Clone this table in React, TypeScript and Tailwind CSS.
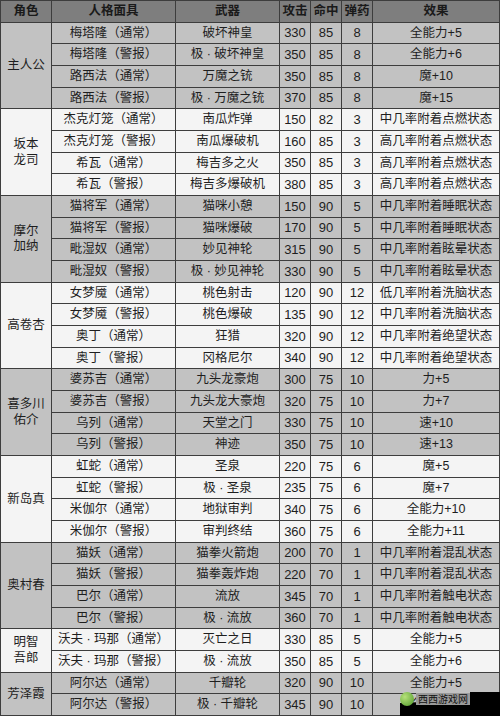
type Row = [string, string, number, number, number, string];

type Group = {
  role: string[];
  shade: 'gray' | 'white';
  rows: Row[];
};

const groups: Group[] = [
  {
    role: ['主人公'],
    shade: 'gray',
    rows: [
      ['梅塔隆（通常）', '破坏神皇', 330, 85, 8, '全能力+5'],
      ['梅塔隆（警报）', '极 · 破坏神皇', 350, 85, 8, '全能力+6'],
      ['路西法（通常）', '万魔之铳', 350, 85, 8, '魔+10'],
      ['路西法（警报）', '极 · 万魔之铳', 370, 85, 8, '魔+15'],
    ],
  },
  {
    role: ['坂本', '龙司'],
    shade: 'white',
    rows: [
      ['杰克灯笼（通常）', '南瓜炸弹', 150, 82, 3, '中几率附着点燃状态'],
      ['杰克灯笼（警报）', '南瓜爆破机', 160, 85, 3, '高几率附着点燃状态'],
      ['希瓦（通常）', '梅吉多之火', 350, 85, 3, '高几率附着点燃状态'],
      ['希瓦（警报）', '梅吉多爆破机', 380, 85, 3, '高几率附着点燃状态'],
    ],
  },
  {
    role: ['摩尔', '加纳'],
    shade: 'gray',
    rows: [
      ['猫将军（通常）', '猫咪小憩', 150, 90, 5, '中几率附着睡眠状态'],
      ['猫将军（警报）', '猫咪爆破', 170, 90, 5, '中几率附着睡眠状态'],
      ['毗湿奴（通常）', '妙见神轮', 315, 90, 5, '中几率附着眩晕状态'],
      ['毗湿奴（警报）', '极 · 妙见神轮', 330, 90, 5, '中几率附着眩晕状态'],
    ],
  },
  {
    role: ['高卷杏'],
    shade: 'white',
    rows: [
      ['女梦魇（通常）', '桃色射击', 120, 90, 12, '低几率附着洗脑状态'],
      ['女梦魇（警报）', '桃色爆破', 135, 90, 12, '中几率附着洗脑状态'],
      ['奥丁（通常）', '狂猎', 320, 90, 12, '中几率附着绝望状态'],
      ['奥丁（警报）', '冈格尼尔', 340, 90, 12, '中几率附着绝望状态'],
    ],
  },
  {
    role: ['喜多川', '佑介'],
    shade: 'gray',
    rows: [
      ['婆苏吉（通常）', '九头龙豪炮', 300, 75, 10, '力+5'],
      ['婆苏吉（警报）', '九头龙大豪炮', 320, 75, 10, '力+7'],
      ['乌列（通常）', '天堂之门', 330, 75, 10, '速+10'],
      ['乌列（警报）', '神迹', 350, 75, 10, '速+13'],
    ],
  },
  {
    role: ['新岛真'],
    shade: 'white',
    rows: [
      ['虹蛇（通常）', '圣泉', 220, 75, 6, '魔+5'],
      ['虹蛇（警报）', '极 · 圣泉', 235, 75, 6, '魔+7'],
      ['米伽尔（通常）', '地狱审判', 340, 75, 6, '全能力+10'],
      ['米伽尔（警报）', '审判终结', 360, 75, 6, '全能力+11'],
    ],
  },
  {
    role: ['奥村春'],
    shade: 'gray',
    rows: [
      ['猫妖（通常）', '猫拳火箭炮', 200, 70, 1, '中几率附着混乱状态'],
      ['猫妖（警报）', '猫拳轰炸炮', 220, 70, 1, '中几率附着混乱状态'],
      ['巴尔（通常）', '流放', 345, 70, 1, '中几率附着触电状态'],
      ['巴尔（警报）', '极 · 流放', 360, 70, 1, '中几率附着触电状态'],
    ],
  },
  {
    role: ['明智', '吾郎'],
    shade: 'white',
    rows: [
      ['沃夫 · 玛那（通常）', '灭亡之日', 330, 85, 5, '全能力+5'],
      ['沃夫 · 玛那（警报）', '极 · 流放', 350, 85, 5, '全能力+6'],
    ],
  },
  {
    role: ['芳泽霞'],
    shade: 'gray',
    rows: [
      ['阿尔达（通常）', '千瓣轮', 320, 90, 10, '全能力+5'],
      ['阿尔达（警报）', '极 · 千瓣轮', 345, 90, 10, '全能力+6'],
    ],
  },
];

const headers = ['角色', '人格面具', '武器', '攻击', '命中', '弹药', '效果'];

const cell = 'flex items-center justify-center text-center leading-none whitespace-nowrap';

export default function App() {
  return (
    <div
      className="relative w-[500px] h-[716px] overflow-hidden text-[12.5px] text-[#1e1e1e]"
      style={{ fontFamily: '"Liberation Sans", "Noto Sans CJK SC", sans-serif' }}
    >
      <div className="grid h-full grid-cols-[50px_123px_103px_30px_30px_30px_126px] grid-rows-[repeat(33,minmax(0,1fr))] gap-px p-px bg-[#3d3d3d]">
        {headers.map(h => (
          <div key={h} className={`${cell} bg-[#7e7e7e] font-bold text-[#1a1a1a]`}>
            {h}
          </div>
        ))}

        {groups.map(g => {
          const bg = g.shade === 'gray' ? 'bg-[#c2c2c2]' : 'bg-[#f4f4f4]';
          return [
            <div
              key={g.role.join('')}
              className={`${cell} ${bg} flex-col gap-[3px] ${g.rows.length === 4 ? 'row-span-4' : 'row-span-2'}`}
            >
              {g.role.map(line => (
                <span key={line}>{line}</span>
              ))}
            </div>,
            ...g.rows.map((r, i) => (
              <div key={g.role.join('') + i} className="contents">
                <div className={`${cell} ${bg}`}>{r[0]}</div>
                <div className={`${cell} ${bg}`}>{r[1]}</div>
                <div className={`${cell} ${bg} text-[13px]`}>{r[2]}</div>
                <div className={`${cell} ${bg} text-[13px]`}>{r[3]}</div>
                <div className={`${cell} ${bg} text-[13px]`}>{r[4]}</div>
                <div className={`${cell} ${bg}`}>{r[5]}</div>
              </div>
            )),
          ];
        })}
      </div>

      {/* site watermark, bottom right */}
      <div className="absolute right-0 bottom-0 w-[30px] h-[24px] bg-black" />
      <div className="absolute left-[400px] bottom-0 w-[100px] h-[13px] bg-black" />
      <div className="absolute left-[400px] top-[692px] w-[14px] h-[14px] rounded-full bg-[radial-gradient(circle_at_35%_35%,#b6e07a,#4f9a2a)]" />
      <div className="absolute left-[416px] top-[693px] w-[54px] h-[12px] bg-[#9a9a9a] flex items-center justify-center text-[10px] leading-none text-[#111]" style={{ fontFamily: '"Noto Sans CJK SC", sans-serif' }}>
        西西游戏网
      </div>
    </div>
  );
}
